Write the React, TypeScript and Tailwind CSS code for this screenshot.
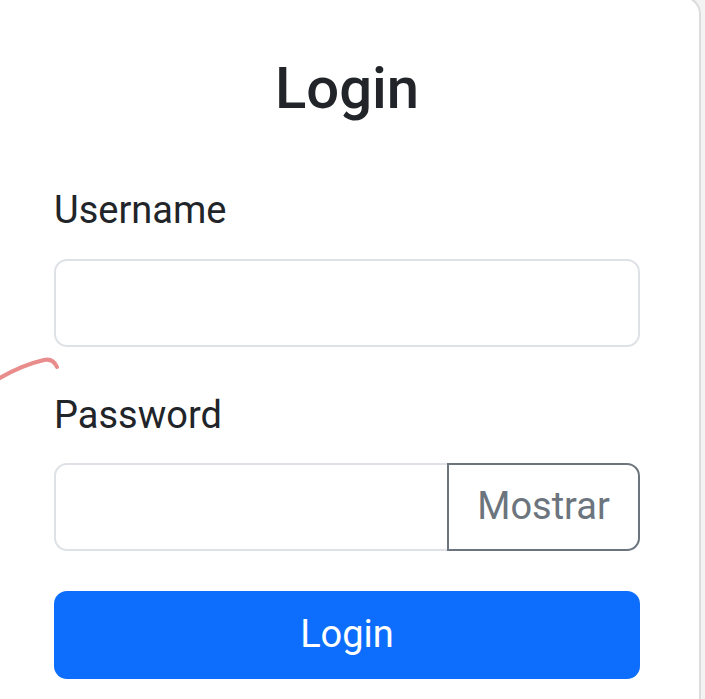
import { useState } from "react"

export default function App() {
  const [show, setShow] = useState(false)

  return (
    <div
      className="relative h-[699px] w-[705px] overflow-hidden bg-[#f3f3f3]"
      style={{ fontFamily: "Roboto, 'Noto Sans', sans-serif" }}
    >
      <div className="-mt-[4px] -ml-[30px] h-[720px] w-[731px] rounded-[18px] border-2 border-[#dcdcdc] bg-white pt-[56px] pr-[59px] pl-[82px]">
        <h3 className="text-center text-[58px] leading-[1.2] font-medium text-[#212529]">Login</h3>

        <form className="mt-[59px]" onSubmit={(e) => e.preventDefault()}>
          <label className="block text-[38px] leading-[54px] text-[#212529]">Username</label>
          <input
            type="text"
            className="mt-[22px] block h-[88px] w-full rounded-[13px] border-2 border-[#dee2e6] bg-white px-[28px] text-[38px] text-[#212529] outline-none"
          />

          <label className="mt-[41px] block text-[38px] leading-[54px] text-[#212529]">Password</label>
          <div className="mt-[21px] flex h-[88px] w-full">
            <input
              type={show ? "text" : "password"}
              className="h-full min-w-0 flex-1 rounded-l-[13px] border-2 border-r-0 border-[#dee2e6] bg-white px-[28px] text-[38px] text-[#212529] outline-none"
            />
            <button
              type="button"
              onClick={() => setShow((s) => !s)}
              className="h-full w-[193px] rounded-r-[13px] border-2 border-[#6c757d] bg-white text-[38px] text-[#6c757d]"
            >
              Mostrar
            </button>
          </div>

          <button
            type="submit"
            className="mt-[40px] block h-[88px] w-full rounded-[13px] bg-[#0d6efd] text-[38px] text-white"
          >
            Login
          </button>
        </form>
      </div>

      {/* stray pen mark on the left edge */}
      <svg className="pointer-events-none absolute top-[340px] left-0" width="80" height="50" viewBox="0 0 80 50">
        <path
          d="M-2 39 Q22 25 44 20 Q53 18 57 27"
          fill="none"
          stroke="#e36f6f"
          strokeWidth="4"
          strokeLinecap="round"
          opacity="0.8"
        />
      </svg>
    </div>
  )
}
